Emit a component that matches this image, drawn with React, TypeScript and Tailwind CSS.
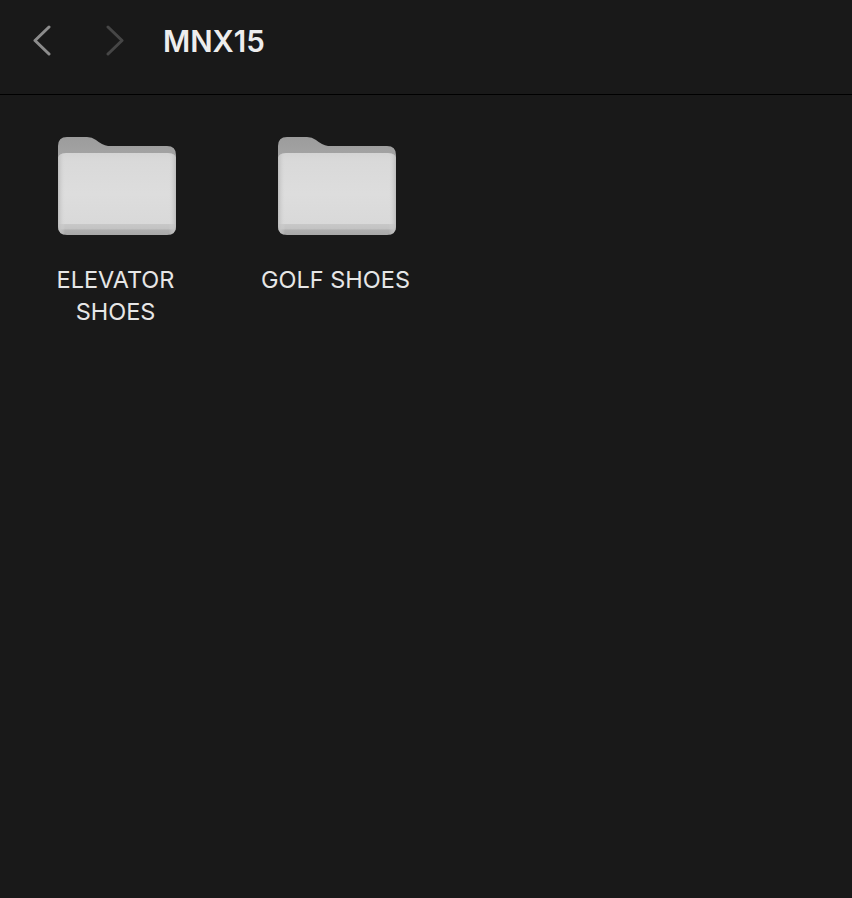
function Folder({ id }: { id: string }) {
  const front = "M0 24 Q0 17 8 17 L110 17 Q118 17 118 24 L118 90 Q118 99 109 99 L9 99 Q0 99 0 90 Z";
  return (
    <svg width="118" height="100" viewBox="0 0 118 100" className="block">
      <defs>
        <linearGradient id={id + "b"} x1="0" y1="0" x2="0" y2="1">
          <stop offset="0" stopColor="#9c9c9c" />
          <stop offset="0.4" stopColor="#a2a2a2" />
          <stop offset="1" stopColor="#b4b4b4" />
        </linearGradient>
        <linearGradient id={id + "f"} x1="0" y1="0" x2="0" y2="1">
          <stop offset="0" stopColor="#d4d4d4" />
          <stop offset="0.1" stopColor="#d9d9d9" />
          <stop offset="0.5" stopColor="#dddddd" />
          <stop offset="0.86" stopColor="#d9d9d9" />
          <stop offset="0.865" stopColor="#c8c8c8" />
          <stop offset="0.93" stopColor="#c2c2c2" />
          <stop offset="0.935" stopColor="#b0b0b0" />
          <stop offset="1" stopColor="#a8a8a8" />
        </linearGradient>
        <linearGradient id={id + "s"} x1="0" y1="0" x2="1" y2="0">
          <stop offset="0" stopColor="#bcbcbc" />
          <stop offset="0.06" stopColor="#d8d8d8" stopOpacity="0" />
          <stop offset="0.94" stopColor="#d8d8d8" stopOpacity="0" />
          <stop offset="1" stopColor="#bcbcbc" />
        </linearGradient>
      </defs>
      <path
        d="M0 10 Q0 1 9 1 L29 1 Q34 1 38 4 Q44 9 50 10 L109 10 Q118 10 118 19 L118 40 L0 40 Z"
        fill={`url(#${id}b)`}
      />
      <path d={front} fill={`url(#${id}f)`} />
      <path d={front} fill={`url(#${id}s)`} />
    </svg>
  );
}

function Item({ id, name }: { id: string; name: string }) {
  return (
    <div className="flex w-[220px] flex-col items-center">
      <div className="pl-[2px]">
        <Folder id={id} />
      </div>
      <div className="mt-[28px] w-[170px] pr-[1px] text-center text-[23.5px] leading-[32px] text-[#e6e6e6]">{name}</div>
    </div>
  );
}

export default function App() {
  return (
    <div className="h-[898px] w-[852px] overflow-hidden bg-[#191919] font-['Inter',sans-serif]">
      <header className="flex h-[95px] items-start border-b border-black pl-[32px] pt-[21px]">
        <svg width="20" height="32" viewBox="0 0 20 32" fill="none" className="mt-[4px]">
          <path d="M17 2 L3 15.5 L17 29" stroke="#8c8c8c" strokeWidth="3" strokeLinecap="round" strokeLinejoin="round" />
        </svg>
        <svg width="20" height="32" viewBox="0 0 20 32" fill="none" className="ml-[53px] mt-[4px]">
          <path d="M3 2 L17 15.5 L3 29" stroke="#464646" strokeWidth="3" strokeLinecap="round" strokeLinejoin="round" />
        </svg>
        <h1 className="ml-[38px] text-[29.5px] leading-[40px] font-semibold text-[#ededed]">MNX15</h1>
      </header>
      <main className="flex pl-[6px] pt-[41px]">
        <Item id="a" name="ELEVATOR SHOES" />
        <Item id="c" name="GOLF SHOES" />
      </main>
    </div>
  );
}
